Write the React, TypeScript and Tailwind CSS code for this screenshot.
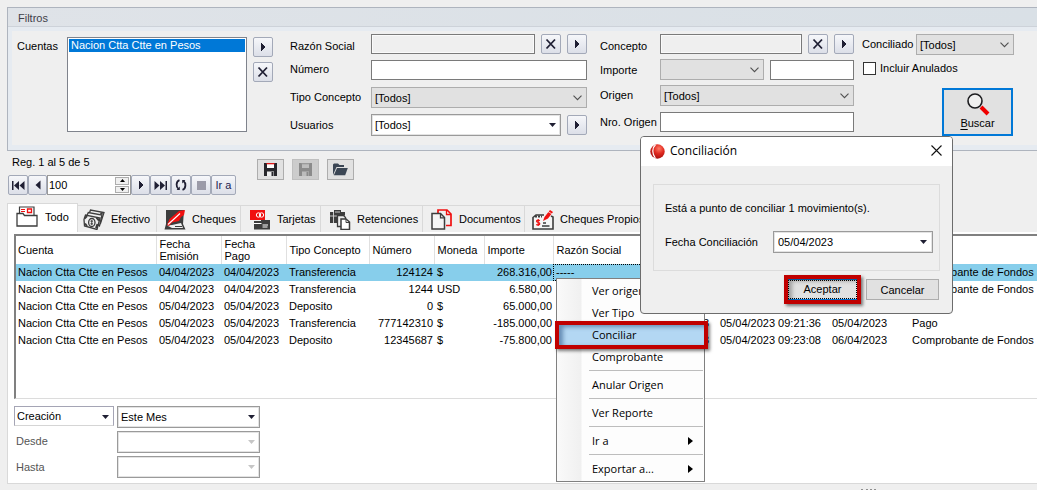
import type { ReactNode } from "react";

const GLYPH = "#1f1f33";

/* ---------- small glyphs ---------- */

function TriRight() {
  return (
    <svg width="10" height="12" viewBox="0 0 10 12" shapeRendering="crispEdges">
      <path d="M3 2h1v1h1v1h1v1h1v2h-1v1h-1v1h-1v1h-1z" fill={GLYPH} />
    </svg>
  );
}

function TriLeft() {
  return (
    <svg width="10" height="12" viewBox="0 0 10 12">
      <path d="M7.5 1.5v9L2.5 6z" fill={GLYPH} />
    </svg>
  );
}

function Cross() {
  return (
    <svg width="12" height="12" viewBox="0 0 12 12">
      <path d="M1.5 1.5l8.5 9M10 1.5l-8.5 9" stroke={GLYPH} strokeWidth="1.8" fill="none" />
    </svg>
  );
}

function DownTriangle({ muted = false }: { muted?: boolean }) {
  return (
    <svg width="7" height="4" viewBox="0 0 7 4">
      <path d="M0 0h7L3.5 4z" fill={muted ? "#c6c6c6" : GLYPH} />
    </svg>
  );
}

function Chevron() {
  return (
    <svg width="9" height="6" viewBox="0 0 9 6">
      <path d="M.5.7l4 4 4-4" stroke="#505050" strokeWidth="1.1" fill="none" />
    </svg>
  );
}

/* ---------- controls ---------- */

function ToolButton({ label, children, className = "w-5" }: { label: string; children: ReactNode; className?: string }) {
  return (
    <button
      type="button"
      aria-label={label}
      className={`flex h-5 shrink-0 items-center justify-center rounded-xs border border-[#a3a9b8] bg-linear-to-b from-[#f6f7fa] to-[#dcdfe8] ${className}`}
    >
      {children}
    </button>
  );
}

type ComboProps = {
  id: string;
  value?: string;
  kind: "gray" | "white" | "thin";
  className: string;
  disabled?: boolean;
  label?: string;
};

function Combo({ id, value = "", kind, className, disabled = false, label }: ComboProps) {
  const look = {
    gray: "h-[21px] border border-[#adadad] bg-[#e1e1e1] pl-[3px]",
    white: "h-[22px] border border-[#9a9a9a] bg-white pl-[3px] shadow-[inset_0_0_0_1px_#e3e3e3]",
    thin: "h-5 border border-[#a5a5b5] border-b-[#d5d5d5] bg-white pl-[2px]",
  }[kind];
  return (
    <div className={`relative ${className}`}>
      <select id={id} aria-label={label} disabled={disabled} className={`block w-full appearance-none text-[11px] leading-4 text-black opacity-100 ${look}`}>
        <option>{value}</option>
      </select>
      <span className="pointer-events-none absolute inset-y-0 right-[5px] flex items-center">
        {kind === "gray" ? <Chevron /> : <DownTriangle muted={disabled} />}
      </span>
    </div>
  );
}

function Field({ id, className, readOnly = false, label }: { id: string; className: string; readOnly?: boolean; label?: string }) {
  return (
    <input
      id={id}
      type="text"
      aria-label={label}
      readOnly={readOnly}
      className={`h-5 min-w-0 border border-[#7a7a7a] px-1 ${readOnly ? "bg-[#efefef] shadow-[inset_0_0_0_1px_#fafafa]" : "bg-white"} ${className}`}
    />
  );
}

function Row({ id, label, labelClass, className = "", children }: { id: string; label: string; labelClass: string; className?: string; children: ReactNode }) {
  return (
    <div className={`flex items-center ${className}`}>
      <label htmlFor={id} className={`shrink-0 whitespace-nowrap ${labelClass}`}>
        {label}
      </label>
      {children}
    </div>
  );
}

/* ---------- filters ---------- */

function Filters() {
  return (
    <section className="border-y border-l border-[#aeb4be] bg-[#e6ebf1]">
      <h2 className="h-[19px] border-b border-[#cdd2d9] bg-linear-to-r from-[#dfe3e8] to-[#d9e0e6] pl-[10px] text-[11px] leading-[20px] text-[#404048]">Filtros</h2>
      <div className="mt-1 mb-[5px] ml-1 flex h-[114px] items-start bg-[#efefef] pt-[3px] pl-[5px]">
        <label htmlFor="cuentas" className="w-[50px] shrink-0 pt-[5px]">
          Cuentas
        </label>
        <select id="cuentas" size={6} defaultValue="nacion" className="mt-[3px] h-[95px] w-[180px] shrink-0 overflow-hidden border border-[#7f838c] bg-white p-px">
          <option value="nacion" className="h-[13px] min-h-0 bg-[#0078d7] bg-linear-to-r from-[#0078d7] to-[#0078d7] px-[2px] py-0 text-[11px] leading-[14px] text-white checked:text-white">
            Nacion Ctta Ctte en Pesos
          </option>
        </select>
        <div className="mt-[3px] ml-[6px] flex shrink-0 flex-col gap-[5px]">
          <ToolButton label="Elegir cuenta"><TriRight /></ToolButton>
          <ToolButton label="Quitar cuenta"><Cross /></ToolButton>
        </div>

        <div className="ml-[17px] flex w-[297px] shrink-0 flex-col">
          <Row id="razon" label="Razón Social" labelClass="w-[81px] pt-1">
            <Field id="razon" readOnly className="mr-[6px] flex-1" />
            <ToolButton label="Quitar razón social"><Cross /></ToolButton>
            <ToolButton label="Elegir razón social" className="ml-[6px] w-5"><TriRight /></ToolButton>
          </Row>
          <Row id="numero" label="Número" labelClass="w-[81px] pb-[2px]" className="mt-[6px]">
            <Field id="numero" className="flex-1" />
          </Row>
          <Row id="tipo" label="Tipo Concepto" labelClass="w-[81px] pb-[2px]" className="mt-[7px]">
            <Combo id="tipo" value="[Todos]" kind="gray" className="flex-1" />
          </Row>
          <Row id="usuarios" label="Usuarios" labelClass="w-[81px]" className="mt-[6px]">
            <Combo id="usuarios" value="[Todos]" kind="white" className="flex-1" />
            <ToolButton label="Elegir usuario" className="ml-[6px] w-5"><TriRight /></ToolButton>
          </Row>
        </div>

        <div className="ml-[13px] flex w-[254px] shrink-0 flex-col">
          <Row id="concepto" label="Concepto" labelClass="w-[60px] pt-1">
            <Field id="concepto" readOnly className="mr-[6px] flex-1" />
            <ToolButton label="Quitar concepto"><Cross /></ToolButton>
            <ToolButton label="Elegir concepto" className="ml-[6px] w-5"><TriRight /></ToolButton>
          </Row>
          <Row id="importe" label="Importe" labelClass="w-[60px]" className="mt-[5px]">
            <Combo id="importe" kind="gray" className="mr-[6px] w-[104px]" />
            <Field id="importe-valor" label="Valor del importe" className="flex-1" />
          </Row>
          <Row id="origen" label="Origen" labelClass="w-[60px] pb-[2px]" className="mt-[5px]">
            <Combo id="origen" value="[Todos]" kind="gray" className="flex-1" />
          </Row>
          <Row id="nro" label="Nro. Origen" labelClass="w-[60px]" className="mt-[6px]">
            <Field id="nro" className="flex-1" />
          </Row>
        </div>

        <div className="ml-2 flex w-[152px] shrink-0 flex-col">
          <Row id="conciliado" label="Conciliado" labelClass="w-[54px] pb-[2px]">
            <Combo id="conciliado" value="[Todos]" kind="gray" className="flex-1" />
          </Row>
          <label className="mt-[6px] flex items-center gap-1 pl-px">
            <input type="checkbox" className="size-[13px] appearance-none border border-[#333] bg-white" />
            Incluir Anulados
          </label>
          <button type="button" className="mt-[13px] mr-px flex h-12 w-[71px] flex-col items-center self-end border-2 border-[#0078d7] bg-[#e1e1e1] pt-[2px]">
            <svg width="24" height="24" viewBox="0 0 24 24">
              <circle cx="9" cy="9" r="7" fill="#f0f0f0" stroke="#1d1d20" strokeWidth="1.6" />
              <path d="M15 15l7 7" stroke="#f00000" strokeWidth="4" />
            </svg>
            <span className="leading-[15px]">
              <span className="underline underline-offset-2">B</span>uscar
            </span>
          </button>
        </div>
      </div>
    </section>
  );
}

/* ---------- record navigation ---------- */

function DiskIcon({ disabled = false }: { disabled?: boolean }) {
  return (
    <svg width="13" height="13" viewBox="0 0 13 13">
      <path d="M0 0h13v13H0z" fill={disabled ? "#8b8b8b" : "#27272c"} />
      <path d="M3 0h7v5H3z" fill={disabled ? "#bdbdbd" : "#fff"} />
      <path d="M2.5 0h8v1.3h-8z" fill={disabled ? "#9a9a9a" : "#e01818"} />
      <path d="M3 8.5h7V13H3z" fill={disabled ? "#bdbdbd" : "#eee"} />
      <path d="M7.5 9h2v4h-2z" fill={disabled ? "#8b8b8b" : "#27272c"} />
    </svg>
  );
}

function Pager() {
  return (
    <div className="flex items-start pl-px">
      <div className="w-[249px] shrink-0">
        <p className="mt-[3px] pl-1 leading-4">Reg. 1 al 5 de 5</p>
        <div className="mt-[5px] flex items-center">
          <ToolButton label="Primera" className="w-5">
            <svg width="13" height="11" viewBox="0 0 13 11">
              <path d="M0 1h1.5v9H0zM7 1v9L2 5.5zM12.5 1v9l-5-4.5z" fill={GLYPH} />
            </svg>
          </ToolButton>
          <ToolButton label="Anterior" className="w-[19px]"><TriLeft /></ToolButton>
          <div className="flex h-5 w-[84px] border border-[#9a9a9a] bg-white">
            <input type="text" aria-label="Registros por página" defaultValue="100" className="w-[66px] bg-transparent pl-px text-[11px] leading-4" />
            <div className="flex flex-1 flex-col gap-px p-px">
              <button type="button" aria-label="Aumentar" className="flex h-2 items-center justify-center border border-[#adadad] bg-[#f0f0f0]">
                <svg width="5" height="3" viewBox="0 0 5 3"><path d="M0 3h5L2.5 0z" /></svg>
              </button>
              <button type="button" aria-label="Disminuir" className="flex h-2 items-center justify-center border border-[#adadad] bg-[#f0f0f0]">
                <svg width="5" height="3" viewBox="0 0 5 3"><path d="M0 0h5L2.5 3z" /></svg>
              </button>
            </div>
          </div>
          <ToolButton label="Siguiente" className="w-[19px]"><TriRight /></ToolButton>
          <ToolButton label="Última" className="w-[21px]">
            <svg width="13" height="11" viewBox="0 0 13 11">
              <path d="M11.5 1H13v9h-1.5zM6 1v9l5-4.5zM.5 1v9l5-4.5z" fill={GLYPH} />
            </svg>
          </ToolButton>
          <ToolButton label="Actualizar" className="w-5">
            <svg width="12" height="12" viewBox="0 0 12 12" fill="none" stroke={GLYPH} strokeWidth="1.8">
              <path d="M4.5 1.2C.8 2.5.8 8 3.6 10M7.5 10.8c3.7-1.3 3.7-6.8.9-8.8" />
              <path d="M4.8 7.5v3.5H1.6zM7.2 4.5V1h3.2z" fill={GLYPH} stroke="none" />
            </svg>
          </ToolButton>
          <ToolButton label="Detener" className="w-5">
            <span className="size-[9px] bg-[#9b9ba8]" />
          </ToolButton>
          <ToolButton label="Ir a" className="w-[25px] text-[#1c1c50]">Ir a</ToolButton>
        </div>
      </div>
      <div className="mt-2 flex gap-2">
        <button type="button" aria-label="Guardar" className="flex h-[21px] w-[27px] items-center justify-center border border-[#adadad] bg-[#e1e1e1]">
          <DiskIcon />
        </button>
        <button type="button" aria-label="Guardar como" disabled className="flex h-[21px] w-[27px] items-center justify-center border border-[#bfbfbf] bg-[#cccccc]">
          <DiskIcon disabled />
        </button>
        <button type="button" aria-label="Abrir" className="flex h-[21px] w-[27px] items-center justify-center border border-[#adadad] bg-[#e1e1e1]">
          <svg width="15" height="13" viewBox="0 0 15 13">
            <path d="M0 12V1.5L1 .5h4l1.5 1.5H11v2H3.5z" fill="#3b4654" />
            <path d="M4 5h10.8l-2.6 7.3H.8z" fill="#3b4654" />
          </svg>
        </button>
      </div>
    </div>
  );
}

/* ---------- tabs ---------- */

const DARK = "#3d3d3d";
const RED = "#f01010";

const icons: Record<string, ReactNode> = {
  Todo: (
    <>
      <path d="M3.5 9V1H18v8" fill="#fff" stroke={DARK} strokeWidth="1.2" />
      <path d="M1 20V7.5h6l1.500 2H21V20z" fill="#fff" stroke={DARK} strokeWidth="1.3" />
      <path d="M5 3.5h4M5 5.5h4" stroke={RED} strokeWidth="1.2" />
      <path d="M11.5 3h4v3.5h-4z" fill="none" stroke={RED} strokeWidth="1.3" />
    </>
  ),
  Efectivo: (
    <>
      <g fill="#efefef" stroke={DARK} strokeWidth="1.3">
        <path d="M6 5l1.5-4L21 3.5l-3.5 11z" />
        <path d="M3.500 7.500L5.300 3.500 19 6l-2.500 11z" />
        <path d="M1 10.500L2.500 6 17 9l-3 11.500L1.500 17z" />
      </g>
      <path d="M1.500 9.500l2.500-2.500M13 19l1.500-4M13.500 8.500l2.500 3M2 14.500l2 2.500" stroke={DARK} strokeWidth="2" />
      <ellipse cx="8.8" cy="13.5" rx="3.2" ry="4" fill="#efefef" stroke={DARK} strokeWidth="1.3" />
      <path d="M8.800 11v5M7.500 12.200h2.400M7.500 14.800h2.400" stroke={DARK} />
      <circle cx="18.5" cy="4.5" r="1.3" fill={DARK} />
    </>
  ),
  Cheques: (
    <>
      <path d="M2 1h18l-1 14 2.500 5.500H.5L2 15z" fill={DARK} />
      <path d="M3 16.500l5 2.500h11l-2-5-9 2z" fill="#efefef" />
      <path d="M3 16l2.500-6L15 2l6-1-1 5-3 2-2 4-7 1.500L5 17z" fill={RED} />
      <path d="M4 15.500L16 4.500" stroke="#fff" strokeWidth="1.1" />
      <path d="M11 17.500h7" stroke={DARK} />
    </>
  ),
  Tarjetas: (
    <>
      <path d="M1 1h15v10H1z" fill={RED} />
      <circle cx="9.5" cy="6" r="2.2" fill="none" stroke="#fff" />
      <circle cx="12.5" cy="6" r="2.2" fill="none" stroke="#fff" />
      <path d="M5 12h7v-1h9v9.500H5z" fill={DARK} />
      <path d="M5 14.500h7.500M13.500 16h5.500M13.500 18h5" stroke="#fff" strokeWidth="1.2" />
    </>
  ),
  Retenciones: (
    <>
      <path d="M1 3h4V1h7v2h4v11H1z" fill={DARK} />
      <path d="M6 3h5M1 7h15M4.500 3v11" stroke="#d8d8d8" strokeWidth=".9" />
      <path d="M8.500 6.500h6l2 2v9h-8z" fill="#efefef" stroke={DARK} strokeWidth="1.3" />
      <path d="M12 10h5l3.500 3v7.500H12z" fill="#fff" stroke={DARK} strokeWidth="1.5" />
      <path d="M17 10v3.500h3.500" fill="none" stroke={DARK} />
    </>
  ),
  Documentos: (
    <>
      <path d="M7 4V1h9l4 4v11.500h-5" fill="none" stroke={RED} strokeWidth="1.7" />
      <path d="M15.500 1v4.500H20" fill="none" stroke={RED} strokeWidth="1.3" />
      <path d="M1 4.500h8.500l4 4v11.500H1z" fill="#f5f5f5" stroke={DARK} strokeWidth="1.5" />
      <path d="M9.500 4.500v4.300h4" fill="none" stroke={DARK} strokeWidth="1.3" />
    </>
  ),
  "Cheques Propios": (
    <>
      <path d="M12 6H4L1 8.500V20h20V8l-2-1" fill="#f5f5f5" stroke={DARK} strokeWidth="1.6" />
      <path d="M3 7.500h7" stroke={DARK} strokeWidth="2.2" strokeDasharray="2 1" />
      <path d="M7.800 11.700c-1-.9-3.300-.7-3.300.6 0 1.500 3.300.8 3.300 2.500 0 1.400-2.500 1.500-3.500.5M6.200 10v7" fill="none" stroke={RED} strokeWidth="1.2" />
      <path d="M11 14h3M10 17h7.500" stroke={DARK} strokeWidth="1.3" />
      <path d="M11 12l1.500-4L18 1l3 2-5 6.500z" fill={RED} />
      <path d="M16 2.500l4 2.500" stroke="#fff" strokeWidth=".7" />
    </>
  ),
};

const tabs = [
  { name: "Efectivo", width: "w-[79px]", gap: "ml-[5px] mr-[6px]" },
  { name: "Cheques", width: "w-[84px]", gap: "ml-[7px] mr-[6px]" },
  { name: "Tarjetas", width: "w-[80px]", gap: "ml-[8px] mr-[6px]" },
  { name: "Retenciones", width: "w-[102px]", gap: "ml-[8px] mr-[6px]" },
  { name: "Documentos", width: "w-[102px]", gap: "ml-[8px] mr-[6px]" },
  { name: "Cheques Propios", width: "w-[126px]", gap: "ml-[7px] mr-[6px]" },
];

function TabIcon({ name, className }: { name: string; className: string }) {
  return (
    <svg width="22" height="21" viewBox="0 0 22 21" className={`shrink-0 ${className}`}>
      {icons[name]}
    </svg>
  );
}

function Tabs() {
  return (
    <div role="tablist" className="mt-2 flex items-end">
      <button type="button" role="tab" aria-selected="true" className="flex h-[29px] w-[71px] shrink-0 items-center border-x border-t border-[#d9d9d9] bg-white pb-[3px] whitespace-nowrap">
        <TabIcon name="Todo" className="mr-[7px] ml-2" />
        Todo
      </button>
      {tabs.map((t) => (
        <button key={t.name} type="button" role="tab" aria-selected="false" className={`flex h-[27px] shrink-0 items-center border-t border-r border-[#d9d9d9] whitespace-nowrap ${t.width}`}>
          <TabIcon name={t.name} className={t.gap} />
          {t.name}
        </button>
      ))}
    </div>
  );
}

/* ---------- table ---------- */

const columns = [
  { title: "Cuenta", width: "w-[140px]" },
  { title: "Fecha Emisión", width: "w-[65px]" },
  { title: "Fecha Pago", width: "w-[65px]" },
  { title: "Tipo Concepto", width: "w-[83px]" },
  { title: "Número", width: "w-[65px]" },
  { title: "Moneda", width: "w-[50px]" },
  { title: "Importe", width: "w-[69px]" },
  { title: "Razón Social", width: "w-[159px]" },
  { title: "", width: "w-[5px]" },
  { title: "", width: "w-[112px]" },
  { title: "", width: "w-[80px]" },
  { title: "", width: "" },
];

const account = "Nacion Ctta Ctte en Pesos";

const rows = [
  [account, "04/04/2023", "04/04/2023", "Transferencia", "124124", "$", "268.316,00", "-----", "", "", "", "Comprobante de Fondos"],
  [account, "04/04/2023", "04/04/2023", "Transferencia", "1244", "USD", "6.580,00", "", "", "", "", "Comprobante de Fondos"],
  [account, "05/04/2023", "05/04/2023", "Deposito", "0", "$", "65.000,00", "", "", "", "", ""],
  [account, "05/04/2023", "05/04/2023", "Transferencia", "777142310", "$", "-185.000,00", "3", "", "05/04/2023 09:21:36", "05/04/2023", "Pago"],
  [account, "05/04/2023", "05/04/2023", "Deposito", "12345687", "$", "-75.800,00", "3", "", "05/04/2023 09:23:08", "06/04/2023", "Comprobante de Fondos"],
];

function cellClass(row: number, col: number) {
  if (col === 0) return "pl-[2px]";
  if (col === 4 || col === 6) return "pr-px text-right";
  if (col !== 7) return "pl-[3px]";
  return row === 0 ? "pl-[3px] outline outline-dotted -outline-offset-1 outline-black" : "pr-[3px] text-right";
}

function Movements() {
  return (
    <div className="h-[165px] overflow-hidden border-t-2 border-b border-l-2 border-t-[#808080] border-b-[#dcdcdc] border-l-[#808080]">
      <table className="w-full table-fixed border-collapse">
        <colgroup>
          {columns.map((c, i) => (
            <col key={i} className={c.width} />
          ))}
        </colgroup>
        <thead>
          <tr className="h-[28px]">
            {columns.map((c, i) => (
              <th key={i} scope="col" className={`pr-[6px] text-left leading-3 font-normal ${i === 0 ? "pl-[2px]" : "pl-[3px]"} ${i > 0 && i < 8 ? "border-l border-[#e0e0e0]" : ""}`}>
                {c.title}
              </th>
            ))}
          </tr>
        </thead>
        <tbody>
          {rows.map((r, i) => (
            <tr key={i} className={`h-[17px] ${i === 0 ? "bg-[#87ceeb]" : ""}`}>
              {r.map((v, j) => (
                <td key={j} className={`whitespace-nowrap leading-[17px] ${cellClass(i, j)}`}>
                  {v}
                </td>
              ))}
            </tr>
          ))}
        </tbody>
      </table>
    </div>
  );
}

function DateFilters() {
  return (
    <div className="mt-[7px] grid grid-cols-[100px_143px] gap-x-[3px] gap-y-[3px]">
      <Combo id="creacion" label="Fecha a filtrar" value="Creación" kind="thin" className="w-full" />
      <Combo id="periodo" label="Período" value="Este Mes" kind="white" className="w-full" />
      <label htmlFor="desde" className="pl-[2px] leading-5 text-[#555]">Desde</label>
      <Combo id="desde" kind="white" disabled className="w-full" />
      <label htmlFor="hasta" className="self-center pl-[2px] text-[#555]">Hasta</label>
      <Combo id="hasta" kind="white" disabled className="w-full" />
    </div>
  );
}

/* ---------- overlays ---------- */

const menu = [
  ["Ver origen", "Ver Tipo", "Conciliar", "Comprobante"],
  ["Anular Origen"],
  ["Ver Reporte"],
  ["Ir a"],
  ["Exportar a..."],
];

function ContextMenu() {
  return (
    <div role="menu" className="absolute top-[278px] left-[556px] w-[149px] border border-[#808080] bg-linear-to-r from-[#fafafa] via-[#f0f0f0] via-[24px] to-[#fdfdfd] to-[25px] py-px font-['Open_Sans','Noto_Sans',sans-serif]">
      {menu.map((group, i) => (
        <div key={i} className={i > 0 ? "flex flex-col" : ""}>
          {i > 0 && <hr className="my-[2px] mr-px ml-8 border-t-[1px] border-b border-t-[#bdbdbd] border-b-[#fdfdfd]" />}
          {group.map((item) => (
            <button
              key={item}
              type="button"
              role="menuitem"
              className={`relative flex h-[22px] w-full items-center justify-between pr-[11px] pl-[35px] text-left ${item === "Conciliar" ? "bg-[#b3d7f3]" : ""}`}
            >
              {item}
              {i > 2 && (
                <svg width="5" height="8" viewBox="0 0 5 8">
                  <path d="M0 0v8l5-4z" />
                </svg>
              )}
              {item === "Conciliar" && (
                <span className="absolute -inset-y-[3px] -right-1 -left-[2px] border-4 border-[#c00000] shadow-[2px_2px_3px_rgba(0,0,0,.5),inset_4px_2px_4px_rgba(40,80,130,.55)]" />
              )}
            </button>
          ))}
        </div>
      ))}
    </div>
  );
}

function ConciliationDialog() {
  return (
    <div role="dialog" aria-labelledby="dlg-title" className="absolute top-[136px] left-[640px] w-[313px] rounded-[4px] border border-[#6c6c6c] bg-[#efefef] pb-[13px]">
      <div className="flex h-[29px] items-center rounded-t-[3px] bg-white pr-[9px] pl-[9px]">
        <svg width="15" height="15" viewBox="0 0 15 15">
          <defs>
            <radialGradient id="ball" cx=".6" cy=".3" r=".7">
              <stop offset="0" stopColor="#ff7a66" />
              <stop offset=".5" stopColor="#e02a20" />
              <stop offset="1" stopColor="#a80f0f" />
            </radialGradient>
          </defs>
          <circle cx="7.5" cy="7.5" r="7.2" fill="url(#ball)" />
          <path d="M5.500 .8C1.800 4 2 9.500 5.300 14" stroke="#fff" strokeWidth="1.2" fill="none" />
        </svg>
        <h2 id="dlg-title" className="ml-[5px] flex-1 pb-px font-['Open_Sans','Noto_Sans',sans-serif] text-[12px]">
          Conciliación
        </h2>
        <button type="button" aria-label="Cerrar" className="flex size-[14px] items-center justify-center pb-[2px]">
          <svg width="11" height="11" viewBox="0 0 11 11">
            <path d="M.5.5l10 10M10.500.5l-10 10" stroke="#111" strokeWidth="1.1" />
          </svg>
        </button>
      </div>
      <div className="mx-3 mt-[18px] h-[87px] border border-[#dcdcdc] pt-[15px] pr-[6px] pl-[11px]">
        <p className="leading-4">Está a punto de conciliar 1 movimiento(s).</p>
        <div className="mt-[15px] flex items-center">
          <label htmlFor="fecha" className="flex-1">Fecha Conciliación</label>
          <div className="flex h-[22px] w-[160px] items-center border border-[#9a9a9a] bg-white pr-[5px] shadow-[inset_0_0_0_1px_#e3e3e3]">
            <input id="fecha" type="text" defaultValue="05/04/2023" className="min-w-0 flex-1 bg-transparent pl-1 text-[11px] leading-4" />
            <button type="button" aria-label="Abrir calendario"><DownTriangle /></button>
          </div>
        </div>
      </div>
      <div className="mt-2 mr-[13px] flex justify-end gap-[9px]">
        <button type="button" className="relative flex h-[21px] w-[69px] items-center justify-center border-y border-y-[#0078d7] bg-[#e1e1e1] pb-px">
          <span className="absolute inset-0 border border-dotted border-black" />
          Aceptar
          <span className="absolute -inset-x-1 -inset-y-[5px] border-4 border-[#c00000] shadow-[2px_2px_3px_rgba(0,0,0,.5),inset_4px_2px_4px_rgba(0,0,0,.3)]" />
        </button>
        <button type="button" className="h-[21px] w-[73px] border border-[#adadad] bg-[#e1e1e1] leading-4">Cancelar</button>
      </div>
    </div>
  );
}

export default function App() {
  return (
    <div className="relative min-h-screen overflow-hidden bg-[#efefef] pt-[7px] pl-[7px] font-['Liberation_Sans',Arial,sans-serif] text-[11px] leading-[14px] text-black">
      <Filters />
      <Pager />
      <Tabs />
      <main className="border-b border-l border-[#d9d9d9] bg-white pt-[2px] pb-[5px] pl-[6px]">
        <Movements />
        <DateFilters />
      </main>
      <div className="mt-[5px] ml-[854px] h-px w-[15px] border-t-2 border-dotted border-[#909090]" />
      <ContextMenu />
      <ConciliationDialog />
    </div>
  );
}
